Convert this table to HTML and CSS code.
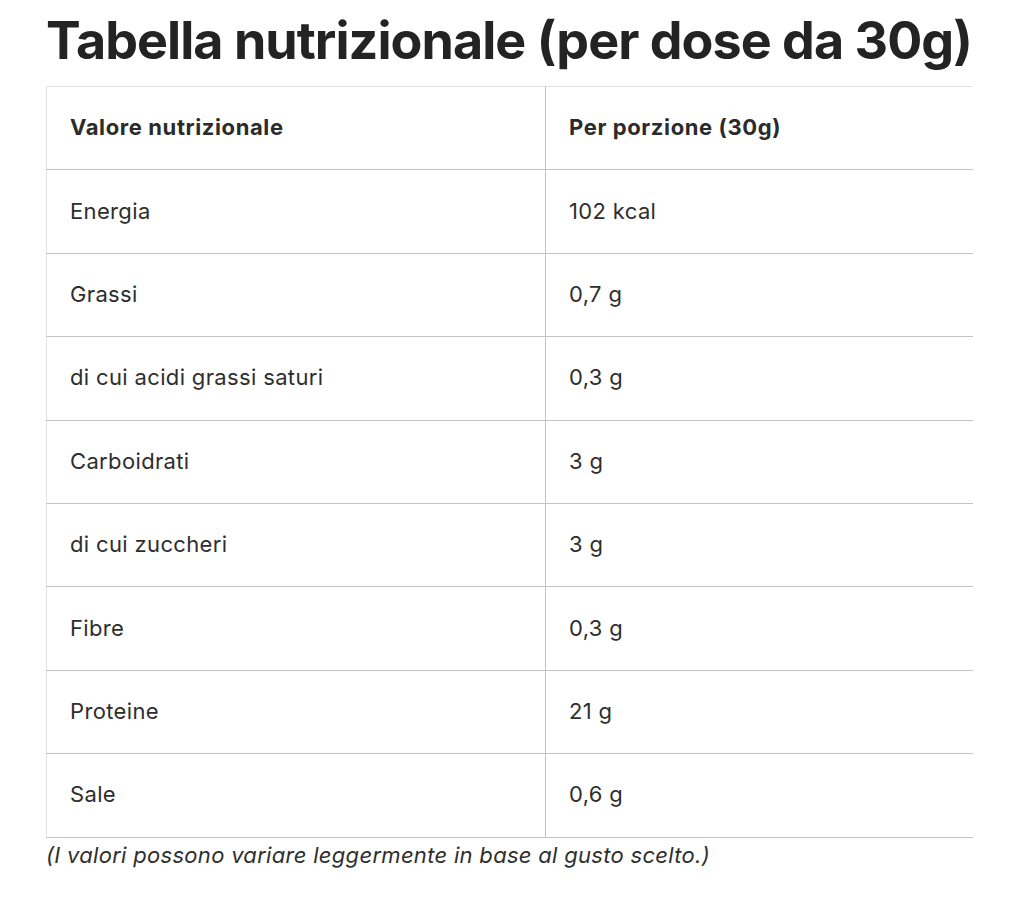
FILE: index.html
```html
<!DOCTYPE html>
<html lang="it">
<head>
<meta charset="utf-8">
<title>Tabella nutrizionale</title>
<link rel="stylesheet" href="styles.css">
</head>
<body>
<main class="wrap">
  <h1 class="title">Tabella nutrizionale (per dose da 30g)</h1>
  <table class="nutri">
    <thead>
      <tr><th>Valore nutrizionale</th><th>Per porzione (30g)</th></tr>
    </thead>
    <tbody>
      <tr><td>Energia</td><td>102 kcal</td></tr>
      <tr><td>Grassi</td><td>0,7 g</td></tr>
      <tr><td>di cui acidi grassi saturi</td><td>0,3 g</td></tr>
      <tr><td>Carboidrati</td><td>3 g</td></tr>
      <tr><td>di cui zuccheri</td><td>3 g</td></tr>
      <tr><td>Fibre</td><td>0,3 g</td></tr>
      <tr><td>Proteine</td><td>21 g</td></tr>
      <tr><td>Sale</td><td>0,6 g</td></tr>
    </tbody>
  </table>
  <p class="note">(I valori possono variare leggermente in base al gusto scelto.)</p>
</main>
</body>
</html>
```

FILE: styles.css
```css
html, body {
  margin: 0;
  padding: 0;
  background: #ffffff;
}

body {
  font-family: Inter, "Noto Sans", "Liberation Sans", sans-serif;
  color: #2b2b2b;
}

.wrap {
  padding: 9px 0 0 46px;
  width: 927px;
}

.title {
  margin: 0 0 14px 0;
  font-size: 52px;
  line-height: 63px;
  font-weight: 700;
  letter-spacing: -0.95px;
  color: #232323;
  white-space: nowrap;
}

.nutri {
  width: 927px;
  border-collapse: collapse;
  table-layout: fixed;
  border-top: 1px solid #e2e2e2;
  border-left: 1px solid #e2e2e2;
}

.nutri th,
.nutri td {
  height: 80.4px;
  padding: 0 23px 2px 23px;
  text-align: left;
  vertical-align: middle;
  font-size: 22px;
  line-height: 28px;
  letter-spacing: 0.35px;
  border-bottom: 1px solid #c4c4c4;
}

.nutri th:first-child,
.nutri td:first-child {
  width: 452px;
  border-right: 1px solid #c4c4c4;
}

.nutri th {
  font-weight: 700;
  letter-spacing: 0.6px;
  color: #2b2b2b;
}

.nutri td {
  font-weight: 400;
  color: #2e2e2e;
}

.note {
  margin: 2px 0 0 0;
  font-size: 22px;
  line-height: 30px;
  font-style: italic;
  letter-spacing: 0.3px;
  color: #2e2e2e;
}
```
